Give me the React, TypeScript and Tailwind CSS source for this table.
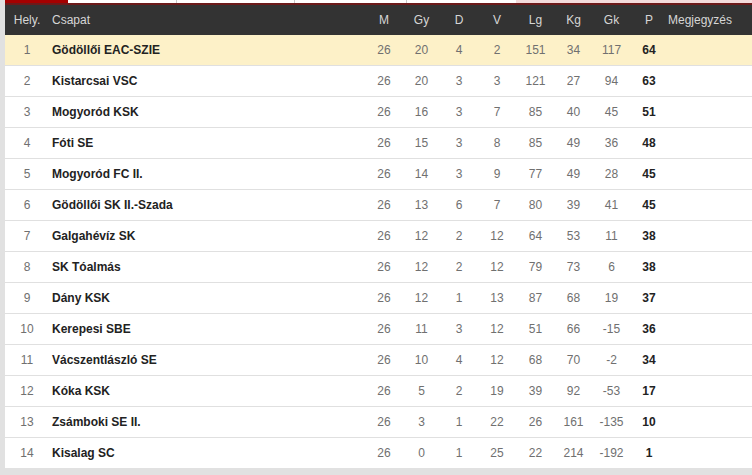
import React from "react";

const rows: [number, string, number, number, number, number, number, number, number, number][] = [
  [1, "Gödöllői EAC-SZIE", 26, 20, 4, 2, 151, 34, 117, 64],
  [2, "Kistarcsai VSC", 26, 20, 3, 3, 121, 27, 94, 63],
  [3, "Mogyoród KSK", 26, 16, 3, 7, 85, 40, 45, 51],
  [4, "Fóti SE", 26, 15, 3, 8, 85, 49, 36, 48],
  [5, "Mogyoród FC II.", 26, 14, 3, 9, 77, 49, 28, 45],
  [6, "Gödöllői SK II.-Szada", 26, 13, 6, 7, 80, 39, 41, 45],
  [7, "Galgahévíz SK", 26, 12, 2, 12, 64, 53, 11, 38],
  [8, "SK Tóalmás", 26, 12, 2, 12, 79, 73, 6, 38],
  [9, "Dány KSK", 26, 12, 1, 13, 87, 68, 19, 37],
  [10, "Kerepesi SBE", 26, 11, 3, 12, 51, 66, -15, 36],
  [11, "Vácszentlászló SE", 26, 10, 4, 12, 68, 70, -2, 34],
  [12, "Kóka KSK", 26, 5, 2, 19, 39, 92, -53, 17],
  [13, "Zsámboki SE II.", 26, 3, 1, 22, 26, 161, -135, 10],
  [14, "Kisalag SC", 26, 0, 1, 25, 22, 214, -192, 1],
];

const grid =
  "grid grid-cols-[43px_317px_38px_37px_38px_38px_39px_37px_39px_36px_85px] items-center";

export default function App() {
  return (
    <div className="w-[752px] h-[475px] overflow-hidden bg-[#e1e1e1] pl-[5px] font-['Liberation_Sans',Arial,sans-serif] text-[12px]">
      <div className="flex h-[3px]">
        <div className="w-[63px] bg-[#a50000]" />
        <div className="w-[108px] bg-white" />
        <div className="w-px bg-[#c9c9c9]" />
        <div className="w-[117px] bg-white" />
        <div className="w-px bg-[#c9c9c9]" />
        <div className="w-[111px] bg-white" />
        <div className="w-px bg-[#c9c9c9]" />
        <div className="w-[109px] bg-white" />
        <div className="flex-1 bg-[#f3dcdc]" />
      </div>
      <div className="h-[2px] bg-[#6c1a1a]" />
      <div className={`${grid} h-[30px] bg-[#333333] text-[#d6d6d6]`}>
        <div className="text-center pl-[1px]">Hely.</div>
        <div className="pl-[4px]">Csapat</div>
        <div className="text-center">M</div>
        <div className="text-center">Gy</div>
        <div className="text-center">D</div>
        <div className="text-center">V</div>
        <div className="text-center">Lg</div>
        <div className="text-center">Kg</div>
        <div className="text-center">Gk</div>
        <div className="text-center">P</div>
        <div className="pl-[1px] whitespace-nowrap">Megjegyzés</div>
      </div>
      {rows.map((r, i) => (
        <div
          key={r[0]}
          className={`${grid} ${i === rows.length - 1 ? "h-[30px]" : "h-[31px] border-b border-[#e0e0e0]"} ${
            i === 0 ? "bg-[#fdf1c8]" : "bg-white"
          }`}
        >
          <div className="text-center text-[#707070] pl-[1px]">{r[0]}</div>
          <div className="pl-[4px] font-bold text-[#222222]">{r[1]}</div>
          {r.slice(2, 9).map((v, j) => (
            <div key={j} className="text-center text-[#707070]">
              {v}
            </div>
          ))}
          <div className="text-center font-bold text-[#222222]">{r[9]}</div>
          <div />
        </div>
      ))}
    </div>
  );
}
